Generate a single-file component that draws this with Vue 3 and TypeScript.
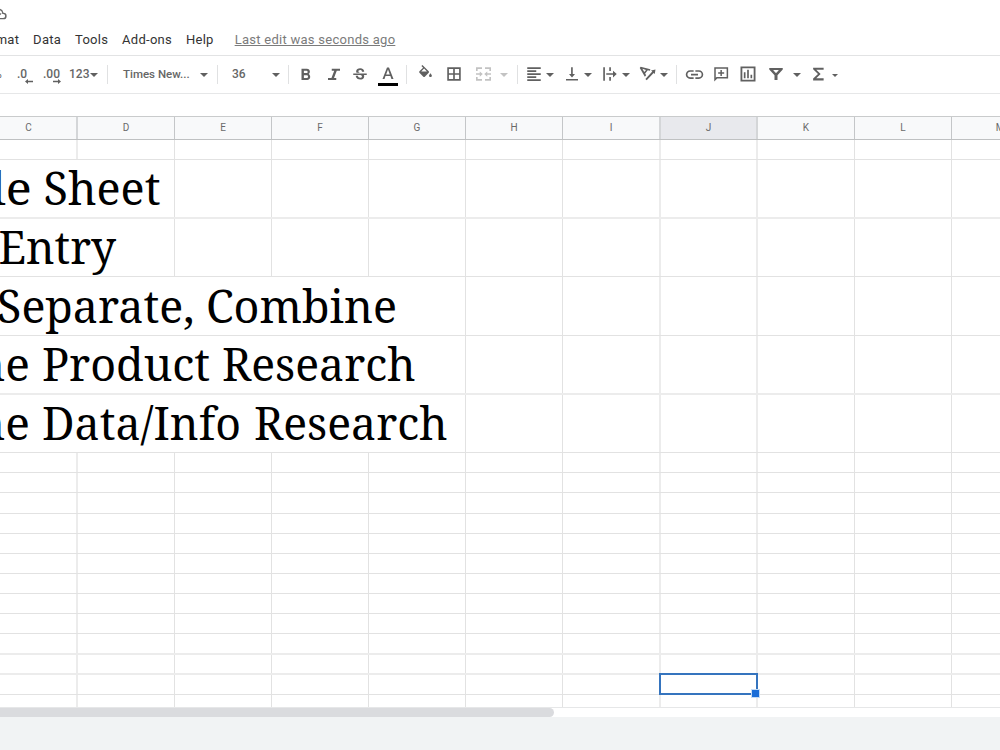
<script setup lang="ts">
interface Word { text: string; x: number; width: number }
interface Row { height: string; span: number; baseline?: number; words?: Word[] }

const menus: string[] = ['Data', 'Tools', 'Add-ons', 'Help']
const columns: string[] = ['C', 'D', 'E', 'F', 'G', 'H', 'I', 'J', 'K', 'L', 'M']

const rows: Row[] = [
  { height: 'r20', span: 1 },
  { height: 'r59 soft', span: 2, baseline: 45, words: [
    { text: 'le', x: -9.2, width: 41 }, { text: 'Sheet', x: 43.5, width: 117 }] },
  { height: 'r58', span: 2, baseline: 44.7, words: [{ text: 'Entry', x: -1.5, width: 117.5 }] },
  { height: 'r59', span: 5, baseline: 45.6, words: [
    { text: 'Separate,', x: -3, width: 197.5 }, { text: 'Combine', x: 206, width: 191 }] },
  { height: 'r59 soft', span: 5, baseline: 45, words: [
    { text: 'he', x: -24, width: 54 }, { text: 'Product', x: 42, width: 168 }, { text: 'Research', x: 222, width: 193.5 }] },
  { height: 'r58', span: 5, baseline: 44.5, words: [
    { text: 'he', x: -24, width: 54 }, { text: 'Data/Info', x: 42, width: 199 }, { text: 'Research', x: 254, width: 193.5 }] },
  { height: 'r20', span: 1 },
  { height: 'r20', span: 1 },
  { height: 'r21', span: 1 },
  { height: 'r20', span: 1 },
  { height: 'r20', span: 1 },
  { height: 'r20', span: 1 },
  { height: 'r20', span: 1 },
  { height: 'r20', span: 1 },
  { height: 'r20', span: 1 },
  { height: 'r21 soft', span: 1 },
  { height: 'r20 soft', span: 1 },
  { height: 'r20', span: 1 },
  { height: 'rlast', span: 1 }
]
const selectedRow = 17
const selectedColumn = 7
const wideLines = [0, 6, 7]
</script>

<template>
  <div class="app">
    <div class="title-row">
      <svg class="cloud" viewBox="0 0 24 24"><path d="M19.4 10A7.5 7.5 0 0 0 5.4 8 6 6 0 0 0 6 20h13a5 5 0 0 0 .4-10zM6 18a4 4 0 0 1 0-8h.7a5.5 5.500 0 0 1 10.800 2h1.500a3 3 0 0 1 0 6z"/><path d="M9 12l3 3 4-4" fill="none" stroke="#666" stroke-width="1.6"/></svg>
    </div>
    <nav class="menu">
      <span class="format">Format</span>
      <span v-for="m in menus" :key="m" class="item">{{ m }}</span>
      <a class="edit">Last edit was seconds ago</a>
    </nav>

    <div class="toolbar">
      <span class="pct"><b>%</b></span>
      <span class="dec">.0<svg viewBox="0 0 8 5"><path d="M0 2.500L3 0v1.800h5v1.400H3V5z"/></svg></span>
      <span class="dec two">.00<svg viewBox="0 0 8 5"><path d="M8 2.500L5 0v1.800H0v1.400h5V5z"/></svg></span>
      <span class="num">123<i class="caret"></i></span>
      <span class="sep"></span>
      <span class="font">Times New...</span>
      <span><i class="caret"></i></span>
      <span class="sep"></span>
      <span class="size">36</span>
      <span><i class="caret"></i></span>
      <span class="sep"></span>
      <span><svg class="ic" viewBox="0 0 24 24"><path d="M15.600 11.800c1-.7 1.600-1.800 1.600-2.800 0-2.300-1.700-4-4-4H6v15h7.700c2.200 0 3.900-1.800 3.900-4 0-1.600-.8-2.900-2-4.200zM9.200 7.600h3.400a1.600 1.600 0 0 1 0 3.200H9.200zm3.700 9.800H9.200v-3.700h3.700a1.850 1.850 0 0 1 0 3.700z"/></svg></span>
      <span><svg class="ic" viewBox="0 0 24 24"><path d="M9 5v2.600h3.300L8.600 17.400H4V20h11v-2.600h-3l3.700-9.800H20V5z"/></svg></span>
      <span><svg class="ic strike" viewBox="0 0 24 24"><path d="M6.850 7.080C6.850 4.370 9.450 3 12.240 3c1.640 0 3 .49 3.900 1.280.77.65 1.460 1.730 1.460 3.240h-3.010c0-.31-.05-.59-.15-.85-.29-.86-1.200-1.280-2.250-1.280-1.860 0-2.340 1.020-2.340 1.700 0 .48.25.88.74 1.210.38.250.77.480 1.410.7H7.390c-.21-.34-.54-.89-.54-1.920zM21 12v-2H3v2h9.620c1.150.45 1.960.75 1.960 1.970 0 1-.81 1.670-2.280 1.670-1.540 0-2.930-.54-2.930-2.510H6.400c0 .55.080 1.130.24 1.580.81 2.290 3.290 3.300 5.670 3.300 2.270 0 5.300-.89 5.300-4.050 0-.3-.01-1.160-.48-1.940H21V12z"/></svg></span>
      <span><svg class="ic color" viewBox="0 0 20 22"><path d="M9 2.500h2L15.500 14h-2.100l-1-2.900H7.500l-1 2.900H4.500zm-.9 7h3.700L10 4.500z"/><path d="M0 18h20v3H0z" fill="#000"/></svg></span>
      <span class="sep"></span>
      <span><svg class="ic fill" viewBox="0 0 24 24"><path d="M16.560 8.940L7.620 0 6.210 1.410l2.380 2.380-5.150 5.150c-.59.59-.59 1.540 0 2.120l5.500 5.500c.29.29.68.44 1.060.44s.77-.15 1.060-.44l5.500-5.500c.59-.58.59-1.530 0-2.120zM6 9l4-4 4 4zm13 2.500s-2 2.170-2 3.500c0 1.100.9 2 2 2s2-.9 2-2c0-1.330-2-3.500-2-3.500z"/></svg></span>
      <span><svg class="ic" viewBox="0 0 24 24"><path d="M3 3v18h18V3zm7.900 15.800H5.200v-5.700h5.700zm0-7.900H5.200V5.200h5.700zm7.900 7.900h-5.700v-5.700h5.700zm0-7.900h-5.700V5.200h5.700z"/></svg></span>
      <span class="dim"><svg class="ic wide" viewBox="0 0 24 24"><path d="M2 3h8v2.200H4.200V8H2zM14 3h8v5h-2.200V5.200H14zM2 16h2.200v2.800H10V21H2zm17.800 0H22v5h-8v-2.200h5.800zM2 11h5V8.500l4 3.500-4 3.500V13H2zM22 11h-5V8.500L13 12l4 3.500V13h5z"/></svg></span>
      <span class="dim"><i class="caret"></i></span>
      <span class="sep"></span>
      <span><svg class="ic" viewBox="0 0 24 24"><path d="M3 3h18v2.200H3zm0 4h12v2.200H3zm0 4h18v2.200H3zm0 4h12v2.200H3zm0 4h18v2.200H3z"/></svg></span>
      <span class="lead"><i class="caret"></i></span>
      <span><svg class="ic" viewBox="0 0 24 24"><path d="M16 12h-3V3h-2.200v9H8l4 4.500zM4 18.500h16v2.300H4z"/></svg></span>
      <span class="lead"><i class="caret"></i></span>
      <span><svg class="ic" viewBox="0 0 24 24"><path d="M3 3h2.200v18H3zm8 0h2.200v5H11zm0 13h2.200v5H11zM7 11h9V7.500l5 4.500-5 4.500V13H7z"/></svg></span>
      <span class="lead"><i class="caret"></i></span>
      <span><svg class="ic" viewBox="0 0 24 24"><path d="M1 4l1.200-1.600 13 3.200-.7 2.200-2.800-.8-3.500 4.200 1.300 2.500-1.700 1.800zm3.500 1.100l2.500 4.300 2.400-2.900zM22 6l-1 6-1.500-1.500-9.200 9.800-1.800-1.700 9.200-9.800-1.700-1.600z"/></svg></span>
      <span class="lead"><i class="caret"></i></span>
      <span class="sep"></span>
      <span><svg class="ic link" viewBox="0 0 24 24"><path d="M3.900 12c0-1.710 1.390-3.100 3.100-3.100h4V7H7a5 5 0 0 0 0 10h4v-1.900H7c-1.710 0-3.100-1.390-3.100-3.100zM8 13h8v-2H8zm9-6h-4v1.900h4a3.100 3.100 0 0 1 0 6.200h-4V17h4a5 5 0 0 0 0-10z"/></svg></span>
      <span><svg class="ic" viewBox="0 0 24 24"><path d="M3 3v19l4-4h14.500V3zm16.500 13H6l-1 1V5h14.500zM11.200 6.500h2v3h3v2h-3v3h-2v-3h-3v-2h3z"/></svg></span>
      <span><svg class="ic chart" viewBox="0 0 24 24"><path d="M3 3v18h18V3zm15.800 15.800H5.200V5.200h13.600zM7 10h2v7H7zm4-3h2v10h-2zm4 6h2v4h-2z"/></svg></span>
      <span><svg class="ic" viewBox="0 0 24 24"><path d="M3 4h18v2l-7 7.500V20h-4v-6.500L3 6zm5.200 2.600l3.100 3.600h1.400l3.100-3.600z" fill-rule="evenodd"/></svg></span>
      <span><i class="caret"></i></span>
      <span><svg class="ic" viewBox="0 0 24 24"><path d="M19.500 3.500h-14v2.300l6.500 6.200-6.500 6v2.500h14v-2.700H9.700l5.800-5.800-5.800-5.800h9.800z"/></svg></span>
      <span><i class="caret small"></i></span>
    </div>
    <div class="formula"></div>

    <div class="sheet">
      <div class="line header">
        <div v-for="(c, i) in columns" :key="c" class="head" :class="{ active: i === selectedColumn, thick: wideLines.includes(i) }"><span>{{ c }}</span></div>
      </div>
      <div v-for="(row, r) in rows" :key="r" class="line" :class="row.height">
        <div v-for="n in 12 - row.span" :key="n" class="cell" :class="[n === 1 ? 'span' + row.span : '', { thick: wideLines.includes(n + row.span - 2) }]">
          <svg v-if="n === 1 && row.words" class="words" width="460" height="57">
            <text v-for="w in row.words" :key="w.text" :x="w.x" :y="row.baseline" :textLength="w.width" lengthAdjust="spacingAndGlyphs">{{ w.text }}</text>
          </svg>
          <div v-if="r === selectedRow && n === selectedColumn + 1" class="selection"><i></i></div>
        </div>
      </div>
    </div>
    <div class="scroll"><div class="thumb"></div></div>
    <div class="footer"></div>
  </div>
</template>

<style>
body { margin: 0; overflow: hidden; }
</style>

<style scoped>
* { box-sizing: border-box; }
.app { width: 1000px; height: 750px; overflow: hidden; background: #fff; font-family: Roboto, sans-serif; display: flex; flex-direction: column; }
.title-row { height: 25px; flex: none; padding-top: 6px; }
.cloud { display: block; width: 17px; height: 16px; margin-left: -10px; fill: #666; }
.menu { height: 31px; flex: none; display: flex; align-items: center; font-size: 13px; line-height: 16px; letter-spacing: .27px; color: #333; border-bottom: 1px solid #e2e3e4; white-space: nowrap; }
.menu > * { flex: none; }
.format { margin-left: -24px; }
.item { margin-left: 13.900px; }
.edit { margin-left: 21px; color: #7b7b7b; text-decoration: underline; }

.toolbar { height: 38px; flex: none; display: grid; align-items: center; padding-bottom: 1px; border-bottom: 1px solid #e6e7e8; font-size: 12px; font-weight: 500; color: #666; white-space: nowrap;
  grid-template-columns: 14px 22px 32px 31px 17px 78px 20px 7px 45px 20px 5px 30px 25px 28px 28px 9px 28px 30px 28px 14px 12px 22px 16px 22px 16px 22px 16px 22px 15px 5px 30px 24px 30px 26px 16px 26px 8px; }
.toolbar > span { display: flex; justify-content: center; align-items: center; }
.toolbar > .sep { justify-self: center; width: 1px; height: 19px; background: #e0e1e2; }
.toolbar > .pct { justify-content: flex-start; overflow: hidden; }
.pct b { margin-left: -7px; font-weight: 400; font-size: 12px; }
.toolbar > .dec { position: relative; justify-content: flex-start; padding-left: 3px; }
.toolbar > .two { padding-left: 7px; }
.dec svg { position: absolute; width: 8px; height: 5px; right: 3px; bottom: -3px; fill: #606060; }
.two svg { right: 7px; }
.toolbar > .num { justify-content: flex-start; padding-left: 1px; gap: 1px; }
.toolbar > .font { justify-content: flex-start; padding-left: 7px; font-size: 11.500px; }
.toolbar > .size { justify-content: flex-start; padding-left: 11px; }
.toolbar > .lead { justify-content: flex-start; padding-left: 1px; }
.caret { width: 0; height: 0; flex: none; border: 4px solid transparent; border-top: 4px solid #606060; border-bottom: 0; margin-top: 2px; }
.caret.small { border-width: 3px 3px 0; }
.dim { opacity: .38; }
.ic { width: 18px; height: 18px; flex: none; fill: #606060; }
.strike { margin-top: 2px; }
.fill { width: 17px; height: 17px; margin-top: -1px; margin-left: 1px; }
.color { width: 20px; height: 22px; margin-top: 3px; }
.wide { width: 19px; }
.link { width: 21px; height: 21px; }
.chart { width: 20px; height: 20px; }
.formula { height: 22px; flex: none; }

.sheet { flex: none; width: 1000px; height: 592px; overflow: hidden; border-top: 1px solid #c9cbcc; }
.line { display: grid; grid-template-columns: 78px 97px 97px 97px 97px 97px 98px 97px 97px 97px 97px; border-bottom: 1px solid #e2e2e2; }
.line.soft { border-bottom: 2px solid #ececec; }
.header { height: 23px; border-bottom: 1px solid #bfc1c2; background: #f8f9fa; }
.head { display: flex; align-items: center; justify-content: center; font-size: 10px; line-height: 20px; color: #6a6a6a; border-right: 1px solid #c4c6c8; padding-bottom: 1px; }
.head.thick { border-right: 2px solid #d4d6d8; }
.head:first-child { margin-left: -20px; padding-left: 1px; }
.head.active { background: #e8e9ed; }
.cell { position: relative; border-right: 1px solid #e2e2e2; min-width: 0; }
.cell.thick { border-right: 2px solid #ececec; }
.span2 { grid-column: span 2; }
.span5 { grid-column: span 5; }
.r20 { height: 20px; }
.r21 { height: 21px; }
.r58 { height: 58px; }
.r59 { height: 59px; }
.rlast { height: 13px; border-bottom-color: #e6e7e8; }
.words { display: block; overflow: visible; }
.words text { font-family: "Noto Serif", "Droid Serif", "DejaVu Serif Condensed", "DejaVu Serif", serif; font-size: 45.500px; fill: #000; }
.selection { position: absolute; left: -2px; right: -2px; top: -2px; bottom: -1px; border: 2px solid #3574be; }
.selection i { position: absolute; z-index: 1; right: -3px; bottom: -4px; width: 7px; height: 7px; background: #1a6dd8; box-shadow: 0 0 0 1px #c4dcf7; }
.scroll { height: 9px; flex: none; background: #fff; }
.thumb { width: 554px; height: 9px; background: #dadbde; border-radius: 0 5px 5px 0; }
.footer { flex: 1; background: #f1f3f4; }
</style>
